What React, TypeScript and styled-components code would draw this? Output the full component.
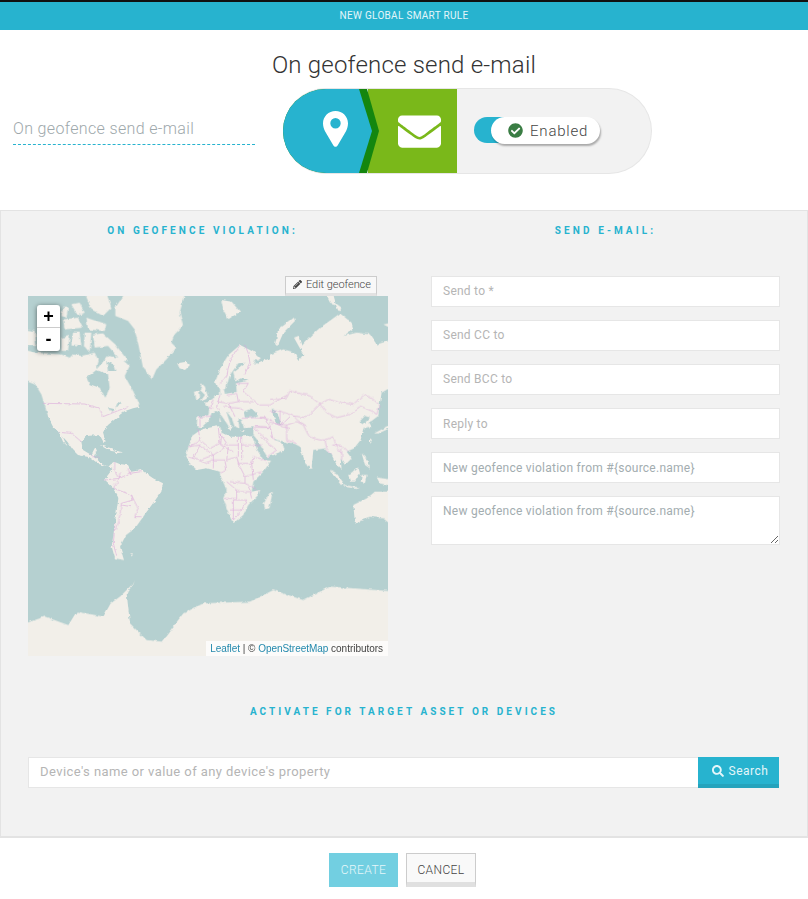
import React from 'react';
import styled, {createGlobalStyle} from 'styled-components';
import {FaCheckCircle, FaEnvelope, FaPencilAlt, FaSearch} from 'react-icons/fa';

const GlobalStyle = createGlobalStyle`
  html, body {
    margin: 0;
    padding: 0;
    background: #fff;
  }
  body {
    font-family: Roboto, "Liberation Sans", sans-serif;
    color: #3c3c3c;
  }
  * {
    box-sizing: border-box;
  }
`

const Page = styled.div`
  width: 808px;
  height: 899px;
  overflow: hidden;
`
const TopBar = styled.div`
  height: 30px;
  border-top: 2px solid #111;
  background: #27b3cf;
  color: #e4f6fa;
  font-size: 10px;
  letter-spacing: 0.3px;
  line-height: 28px;
  text-align: center;
`
const Intro = styled.div`
  height: 180px;
  padding-top: 21px;
`
const Title = styled.h1`
  margin: 0;
  height: 37px;
  font-size: 24px;
  font-weight: 300;
  letter-spacing: 0.2px;
  line-height: 28px;
  text-align: center;
  color: #333;
`
const IntroRow = styled.div`
  display: flex;
  align-items: flex-start;
`
const NameInput = styled.input`
  width: 242px;
  height: 34px;
  margin: 23px 0 0 13px;
  padding: 1px 0 0;
  border: 0;
  border-bottom: 1px dashed #27b3cf;
  outline: 0;
  background: transparent;
  color: #9ea8ab;
  font: 300 16px Roboto, sans-serif;
  letter-spacing: 0.35px;
`
const Pill = styled.div`
  display: flex;
  width: 369px;
  height: 86px;
  margin-left: 28px;
  border: 1px solid #e6e6e6;
  border-left: 0;
  border-radius: 43px;
  background: #f2f2f2;
  overflow: hidden;
`
const Source = styled.div`
  position: relative;
  z-index: 1;
  display: flex;
  flex: none;
  align-items: center;
  justify-content: center;
  width: 97px;
  padding-left: 8px;
  background: #14860f;
  clip-path: polygon(0 0, 84px 0, 96px 50%, 84px 100%, 0 100%);

  &::before {
    content: '';
    position: absolute;
    inset: 0;
    background: #27b3cf;
    clip-path: polygon(0 0, 76px 0, 89px 50%, 76px 100%, 0 100%);
  }

  svg {
    position: relative;
    margin-top: -4px;
  }
`
const Action = styled.div`
  display: flex;
  flex: none;
  align-items: center;
  justify-content: center;
  width: 89px;
  margin-left: -12px;
  padding-left: 13px;
  background: #7ab81a;
  color: #fff;
  font-size: 43px;
`
const ToggleWrap = styled.div`
  position: relative;
  width: 126px;
  height: 27px;
  margin: 28px 0 0 17px;
`
const Track = styled.div`
  width: 50px;
  height: 26px;
  border-radius: 13px;
  background: #27b3cf;
`
const Knob = styled.div`
  position: absolute;
  top: 0;
  left: 17px;
  display: flex;
  align-items: center;
  gap: 7px;
  width: 109px;
  height: 27px;
  padding: 0 0 0 17px;
  border-radius: 14px;
  background: #fff;
  box-shadow: 1px 2px 2px rgba(0, 0, 0, 0.3);
  color: #444;
  font-size: 15px;
  font-weight: 300;
  letter-spacing: 0.8px;

  svg {
    color: #3a7d44;
    font-size: 15px;
  }
`
const Panel = styled.div`
  height: 628px;
  border: 1px solid #e3e3e3;
  border-bottom-width: 2px;
  background: #f2f2f2;
`
const Columns = styled.div`
  display: grid;
  grid-template-columns: 430px 1fr;
`
const Heading = styled.h3`
  margin: 0;
  height: 36px;
  padding: 14px 27px 0 0;
  color: #27b3cf;
  font-size: 10px;
  font-weight: 700;
  letter-spacing: 3.1px;
  line-height: 12px;
  text-align: center;
`
const MapColumn = styled.div`
  padding: 0 0 0 27px;
`
const EditRow = styled.div`
  display: flex;
  justify-content: flex-end;
  width: 360px;
  height: 20px;
  margin-top: 29px;
  padding-right: 11px;
`
const EditButton = styled.div`
  display: flex;
  align-items: center;
  gap: 4px;
  width: 92px;
  height: 20px;
  padding: 0 0 2px 7px;
  border: 1px solid #ccc;
  border-bottom: 3px solid #e2e2e2;
  background: #f8f8f8;
  color: #444;
  font-size: 11px;
  font-weight: 300;
  letter-spacing: -0.05px;
  white-space: nowrap;

  svg {
    font-size: 9px;
  }
`
const MapBox = styled.div`
  position: relative;
  width: 360px;
  height: 360px;
  background: #b5d0d0;
  overflow: hidden;

  > svg {
    display: block;
    width: 360px;
    height: 360px;
  }
`
const Zoom = styled.div`
  position: absolute;
  top: 9px;
  left: 9px;
  width: 23px;
  border-radius: 3px;
  background: #fff;
  box-shadow: 0 1px 5px rgba(0, 0, 0, 0.55);
`
const ZoomBtn = styled.div<{ last?: boolean }>`
  height: 23px;
  border-bottom: ${props => props.last ? '0' : '1px solid #ccc'};
  color: #000;
  font: 700 18px/22px "Liberation Sans", sans-serif;
  text-align: center;
`
const Attribution = styled.div`
  position: absolute;
  right: 0;
  bottom: 0;
  height: 15px;
  padding: 0 5px 0 4px;
  background: rgba(255, 255, 255, 0.75);
  color: #444;
  font: 10px/15px "Liberation Sans", sans-serif;
  letter-spacing: -0.03px;
  white-space: nowrap;

  a {
    color: #2489ad;
  }
`
const FormColumn = styled.div`
  display: flex;
  flex-direction: column;
  gap: 13px;
  width: 349px;
  margin-top: 29px;
`
const fieldCss = `
  display: block;
  width: 100%;
  border: 1px solid #e6e6e6;
  outline: 0;
  background: #fff;
  color: #a3adb0;
  font: 400 12px Roboto, sans-serif;
  letter-spacing: 0.25px;
  &::placeholder {
    color: #b5b5b5;
    opacity: 1;
  }
`
const Field = styled.input<{ low?: boolean }>`
  ${fieldCss}
  height: 31px;
  padding: 0 11px ${props => props.low ? '0' : '2px'};
`
const Area = styled.textarea`
  ${fieldCss}
  height: 49px;
  padding: 7px 11px;
  margin: 0;
  resize: vertical;
`
const TargetHeading = styled(Heading)`
  height: auto;
  padding: 0;
  margin-top: 50px;
  letter-spacing: 3.05px;
`
const SearchRow = styled.div`
  display: flex;
  width: 751px;
  margin: 39px 0 0 27px;
`
const SearchInput = styled.input`
  ${fieldCss}
  flex: 1;
  height: 31px;
  padding: 0 11px 3px;
  border-right: 0;
  font-size: 13px;
  letter-spacing: 0.42px;
`
const SearchButton = styled.div`
  display: flex;
  flex: none;
  align-items: center;
  justify-content: center;
  gap: 5px;
  width: 81px;
  height: 31px;
  padding-left: 3px;
  border-bottom: 4px solid #25a3bc;
  background: #27b3cf;
  color: #e4f6fa;
  font-size: 12px;
  letter-spacing: 0.5px;
`
const Footer = styled.div`
  display: flex;
  justify-content: center;
  gap: 8px;
  padding: 15px 3px 0 0;
`
const FooterButton = styled.div<{ primary?: boolean }>`
  width: ${props => props.primary ? '69px' : '70px'};
  height: 34px;
  border: ${props => props.primary ? '0' : '1px solid #ccc'};
  border-bottom: ${props => props.primary ? '0' : '5px solid #e0e0e0'};
  background: ${props => props.primary ? '#72cfe1' : '#f9f9f9'};
  color: ${props => props.primary ? '#e6f7fa' : '#444'};
  font-size: 12px;
  font-weight: 300;
  letter-spacing: 0.4px;
  line-height: ${props => props.primary ? '34px' : '32px'};
  text-align: center;
`

type Region = {
    x: number
    y: number
    land: string[]
    water?: string[]
    borders?: string[]
}

// traced by eye, each region in its own local coordinates (3 units per page pixel)
const regions: Region[] = [
    {
        // Canada and Greenland
        x: 0, y: 0,
        land: [
            '292,-10 262,35 262,60 300,75 320,100 332,150 345,215 372,250 385,220 415,190 445,155 430,140 440,115 465,90 455,50 472,-10',
            '-10,162 25,170 60,172 100,175 125,185 135,175 160,180 200,170 212,195 205,220 240,180 275,185 305,210 290,240 315,285 335,325 305,330 280,352 235,360 60,360 40,295 20,262 -10,250',
            '170,-10 235,-10 250,35 225,60 190,40',
            '105,35 120,35 115,65 100,60',
            '130,25 155,20 170,50 150,60',
            '105,70 150,65 165,95 110,100',
            '175,65 235,85 230,105 180,100',
            '135,110 155,110 160,150 130,145',
            '170,110 190,110 185,170 168,150',
            '100,125 125,120 120,165 100,165',
            '195,115 225,112 262,145 300,195 280,195 240,150 200,155',
            '-10,100 20,105 25,150 -10,150',
        ],
        water: [
            '175,245 205,222 240,235 245,275 232,305 215,275 185,265',
            '235,195 255,205 262,225 240,225',
            '270,318 280,322 262,335',
            '240,335 262,340 250,350',
        ],
    },
    {
        // Americas
        x: 0, y: 312,
        land: [
            '45,0 320,0 335,20 315,25 285,35 270,50 240,75 225,97 233,125 226,125 215,105 175,108 160,125 165,150 190,165 200,145 207,150 197,170 215,185 238,198 258,185 275,192 300,195 310,215 340,210 375,235 405,250 400,275 375,310 360,330 340,350 320,365 315,390 262,390 275,320 275,300 255,265 228,240 240,225 255,205 240,198 212,192 185,172 150,165 135,150 118,125 92,97 75,80 62,55 65,15',
            '92,95 100,100 115,135 105,125',
            '215,135 250,145 275,157 245,152',
            '262,152 285,157 265,160',
        ],
        borders: [
            '45,10 170,12 215,25 225,50 270,32 300,20',
            '92,97 130,100 160,125',
            '187,160 195,170 215,175',
            '260,185 260,210 275,235 228,240',
            '275,235 255,265 270,270 310,285 315,300 280,310 275,350 265,390',
            '300,205 305,220 340,215',
            '280,215 275,235 295,225 310,215',
            '310,285 330,325 320,350 340,350',
            '280,315 310,320',
        ],
    },
    {
        // southern ocean
        x: -24, y: 492,
        land: [
            '390,140 370,170 345,205 318,225 300,260 312,300 285,295 275,260 285,190 297,100 340,100',
            '0,495 75,470 145,495 170,455 250,470 272,430 300,410 345,365 320,400 330,490 380,540 425,545 490,460 550,430 690,425 760,390 850,420 930,380 1130,395 1130,620 0,620',
            '330,280 340,280 335,285',
        ],
        borders: ['285,190 280,250 290,290'],
    },
    {
        // Europe and the Middle East
        x: 426, y: 132,
        land: [
            '250,262 222,265 215,240 205,235 208,265 195,262 185,235 168,212 182,255 190,262 178,262 155,228 140,212 125,218 118,240 95,262 80,258 82,232 115,226 118,205 105,185 125,182 135,165 150,165 150,140 162,150 165,162 200,155 198,130 235,122 212,115 195,125 190,95 225,68 205,70 180,105 168,145 150,150 135,128 150,85 175,45 210,15 250,35 272,55 252,72 290,58 360,40 360,300 330,298 310,298 322,318 340,320 345,330 292,352 262,300 250,285',
            '22,70 50,65 60,75 45,90 28,85',
            '95,130 105,140 115,175 90,185 105,165 90,150',
            '72,155 88,152 90,172 75,178',
            '150,228 156,245 148,245',
            '170,262 184,260 180,270',
            '210,270 225,270 218,274',
            '238,258 248,256 242,262',
        ],
        water: [
            '222,215 245,205 265,225 250,232 225,232',
            '305,205 320,215 335,255 320,250 310,230',
            '250,60 268,62 262,72',
        ],
        borders: [
            '210,18 180,60 170,110 150,130',
            '225,15 235,40 240,70 225,100',
            '200,130 235,130 220,155 250,180 270,195 300,195 352,165',
            '150,165 140,200 150,210',
            '170,165 200,160 205,185 175,190 140,185',
            '205,185 250,185',
            '175,190 195,230',
            '160,200 210,205 220,210',
            '130,205 118,205 130,180',
            '85,232 125,228',
            '90,235 90,258',
            '215,235 285,232 295,250 300,262 255,258',
            '255,262 300,262 310,300',
            '250,262 275,285 295,300',
            '270,290 320,330 292,350',
            '270,232 305,240',
            '300,240 335,260 360,265',
            '335,255 360,230',
            '85,268 90,300 60,320',
            '145,262 150,310 120,325 90,300',
            '155,280 152,315 190,335',
            '215,290 215,360',
            '215,315 275,315',
        ],
    },
    {
        // Africa
        x: 426, y: 432,
        land: [
            '95,-32 125,-38 150,-42 155,-22 180,-10 215,-10 245,-15 262,30 280,60 303,62 280,95 250,125 245,155 270,150 265,165 235,195 220,225 190,250 180,230 170,205 160,175 170,150 150,105 150,95 110,85 80,90 55,65 48,50 55,20 70,-15',
            '298,160 308,155 298,205 285,208 282,190',
        ],
        borders: [
            '55,20 90,15 130,45 160,25 170,10 150,-20',
            '90,15 70,55 55,50',
            '90,60 130,45 130,85',
            '70,55 110,70 125,60 165,60 170,90 150,100',
            '175,20 170,60 200,50 205,70 245,70 250,50 290,65',
            '205,-10 205,50',
            '205,15 170,15',
            '205,70 225,110 225,130 265,150',
            '180,125 225,130',
            '170,125 200,150 200,175 165,175',
            '200,155 240,155 245,175',
            '190,180 230,180 215,210 180,210',
            '190,180 190,240 215,210',
            '245,70 250,120',
            '225,110 275,95',
            '235,140 245,160',
        ],
    },
    {
        // Russia
        x: 726, y: 0,
        land: [
            '0,175 40,160 72,170 85,195 100,175 72,125 85,120 95,150 118,125 150,95 185,70 210,52 245,80 250,100 220,120 260,110 300,115 320,145 370,130 370,270 335,290 330,320 325,360 305,375 270,390 0,390',
            '15,145 25,100 72,65 75,75 40,110 25,145',
            '165,-10 190,-5 198,25 180,20',
            '195,20 215,35 205,45',
            '340,85 370,80 370,100',
        ],
        water: ['268,378 285,360 300,365 280,385'],
        borders: [
            '0,310 50,305 60,285 100,295 120,300 150,325 175,310 210,320 250,325 255,320 285,295 310,310 330,330 320,355 305,345 270,330',
            '150,325 170,350 200,365 240,355 270,335',
            '0,345 30,345 70,360 110,365 150,325',
            '30,345 30,390',
            '70,360 85,375 110,390',
        ],
    },
    {
        // South and East Asia, Australia
        x: 726, y: 372,
        land: [
            '0,0 290,0 300,20 280,25 272,60 252,85 230,95 245,115 225,135 212,115 215,150 200,135 185,105 165,85 130,90 125,140 108,135 90,80 75,72 20,60 0,20',
            '0,55 30,65 42,80 0,105',
            '312,40 370,10 370,20 325,40',
            '293,0 305,20 298,25',
            '120,132 128,145 120,146',
            '275,100 295,120 300,145 285,135',
            '180,148 200,160 225,195 215,195',
            '220,195 270,203 260,207 225,200',
            '235,165 265,142 270,160 255,185 240,185',
            '275,165 290,165 285,190 272,185',
            '320,172 370,180 370,200 330,190',
            '370,215 315,215 290,235 250,255 255,310 300,290 340,295 370,320',
            '300,55 306,60 300,72',
        ],
        borders: [
            '0,10 50,15 50,60 80,70',
            '50,15 80,5 100,15 115,45 130,55 150,60 165,60 190,50 200,80 215,100',
            '165,60 170,85 185,105',
            '190,75 220,80 235,95',
            '215,85 215,120',
        ],
    },
    {
        // Svalbard, far north
        x: -24, y: -78,
        land: [
            '604,90 635,95 660,125 625,148 610,120',
        ],
    },
];

const WorldMap = () => (
    <svg viewBox="0 0 1080 1080" aria-hidden="true">
        <defs>
            <filter id="soft" filterUnits="userSpaceOnUse" x="-20" y="-20" width="1120" height="1120">
                <feTurbulence type="fractalNoise" baseFrequency="0.07" numOctaves="2" seed="4" result="noise"/>
                <feDisplacementMap in="SourceGraphic" in2="noise" scale="10" xChannelSelector="R" yChannelSelector="G"/>
                <feGaussianBlur stdDeviation="1.2"/>
            </filter>
        </defs>
        <g filter="url(#soft)">
            {regions.map((r, i) => (
                <g key={i} transform={`translate(${r.x} ${r.y})`}>
                    {r.land.map((points, j) => <polygon key={j} points={points} fill="#f2efe9"/>)}
                </g>
            ))}
            {regions.map((r, i) => (
                <g key={i} transform={`translate(${r.x} ${r.y})`}>
                    {(r.water || []).map((points, j) => <polygon key={j} points={points} fill="#b5d0d0"/>)}
                </g>
            ))}
            {regions.map((r, i) => (
                <g key={i} transform={`translate(${r.x} ${r.y})`}>
                    {(r.borders || []).map((points, j) => (
                        <polyline key={j} points={points} fill="none" stroke="#d9a4d9" strokeWidth="1.7"/>
                    ))}
                </g>
            ))}
        </g>
    </svg>
);

const PinIcon = () => (
    <svg width="25" height="36" viewBox="0 0 25 36" fill="#fff" aria-hidden="true">
        <path
            fillRule="evenodd"
            d="M12.5 0C5.6 0 0 5.5 0 12.2c0 3 .7 5.2 2 8.1l8.4 14.2c1 1.8 3.2 1.8 4.2 0L23 20.3c1.3-2.9 2-5.1 2-8.1C25 5.5 19.4 0 12.5 0zm0 7a5.2 5.2 0 1 1 0 10.400a5.2 5.2 0 0 1 0-10.400z"
        />
    </svg>
);

const App = () => {
    return (
        <Page>
            <GlobalStyle/>
            <TopBar>NEW GLOBAL SMART RULE</TopBar>
            <Intro>
                <Title>On geofence send e-mail</Title>
                <IntroRow>
                    <NameInput readOnly value="On geofence send e-mail"/>
                    <Pill>
                        <Source><PinIcon/></Source>
                        <Action><FaEnvelope/></Action>
                        <ToggleWrap>
                            <Track/>
                            <Knob><FaCheckCircle/>Enabled</Knob>
                        </ToggleWrap>
                    </Pill>
                </IntroRow>
            </Intro>
            <Panel>
                <Columns>
                    <div>
                        <Heading>ON GEOFENCE VIOLATION:</Heading>
                        <MapColumn>
                            <EditRow>
                                <EditButton><FaPencilAlt/>Edit geofence</EditButton>
                            </EditRow>
                            <MapBox>
                                <WorldMap/>
                                <Zoom>
                                    <ZoomBtn>+</ZoomBtn>
                                    <ZoomBtn last>-</ZoomBtn>
                                </Zoom>
                                <Attribution><a>Leaflet</a> | © <a>OpenStreetMap</a> contributors</Attribution>
                            </MapBox>
                        </MapColumn>
                    </div>
                    <div>
                        <Heading>SEND E-MAIL:</Heading>
                        <FormColumn>
                            <Field placeholder="Send to *"/>
                            <Field placeholder="Send CC to"/>
                            <Field placeholder="Send BCC to"/>
                            <Field low placeholder="Reply to"/>
                            <Field low readOnly value="New geofence violation from #{source.name}"/>
                            <Area readOnly value="New geofence violation from #{source.name}"/>
                        </FormColumn>
                    </div>
                </Columns>
                <TargetHeading>ACTIVATE FOR TARGET ASSET OR DEVICES</TargetHeading>
                <SearchRow>
                    <SearchInput placeholder="Device's name or value of any device's property"/>
                    <SearchButton><FaSearch/>Search</SearchButton>
                </SearchRow>
            </Panel>
            <Footer>
                <FooterButton primary>CREATE</FooterButton>
                <FooterButton>CANCEL</FooterButton>
            </Footer>
        </Page>
    );
};

export default App;
